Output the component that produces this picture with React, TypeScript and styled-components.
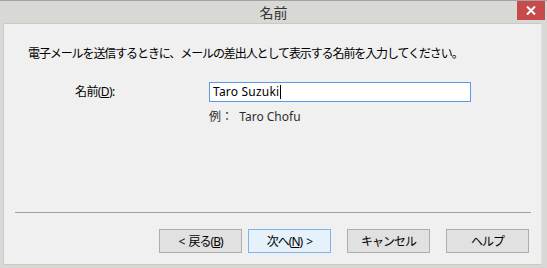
import React from 'react';
import styled, { createGlobalStyle } from 'styled-components';

const GlobalStyle = createGlobalStyle`
  html, body { margin: 0; padding: 0; background: #d8d8d4; }
  body { font-family: "Noto Sans", "Noto Sans CJK JP", sans-serif; }
`;

const Window = styled.div`
  width: 547px;
  height: 268px;
  box-sizing: border-box;
  background: #d8d8d4;
  border-top: 1px solid #a3a3a3;
  display: flex;
  flex-direction: column;
`;

const TitleBar = styled.div`
  height: 22px;
  position: relative;
  display: flex;
  align-items: center;
  justify-content: center;
  font-family: "Noto Sans CJK JP", sans-serif;
  font-size: 14px;
  color: #333;
`;

const CloseButton = styled.div`
  position: absolute;
  top: 0;
  right: 2px;
  width: 28px;
  height: 19px;
  background: #c74b4b;
  display: flex;
  align-items: center;
  justify-content: center;
`;

const Body = styled.div`
  flex: 1;
  margin: 0 5px 3px 3px;
  border: 1px solid #c9c9c6;
  border-right-color: #e2e2de;
  background: #f0f0f0;
  display: flex;
  flex-direction: column;
  font-size: 12px;
  color: #000;
`;

// Meiryo UI is narrow: tighten the CJK runs
const Intro = styled.div`
  padding: 21px 0 0 24px;
  line-height: 18px;
  letter-spacing: -1.1px;
`;

const FormGrid = styled.div`
  display: grid;
  grid-template-columns: 134px 262px;
  padding: 19px 0 0 71px;
  align-items: center;
`;

const Label = styled.div`
  line-height: 20px;
  letter-spacing: -0.6px;
`;

const TextBox = styled.div`
  box-sizing: border-box;
  height: 20px;
  border: 1px solid #569de5;
  background: #fff;
  padding: 0 3px;
  line-height: 18px;
  display: flex;
  align-items: center;
  letter-spacing: 0.2px;
`;

const Caret = styled.span`
  display: inline-block;
  width: 1px;
  height: 14px;
  background: #000;
  margin-left: 1px;
`;

const Hint = styled.div`
  grid-column: 2;
  margin-top: 7px;
  color: #2e2e2e;
  line-height: 16px;
`;

const Separator = styled.div`
  margin: auto 10px 0 11px;
  height: 1px;
  background: #a0a0a0;
`;

const ButtonRow = styled.div`
  display: flex;
  justify-content: flex-end;
  padding: 16px 12px 11px 0;
`;

const Button = styled.div<{ $primary?: boolean; $gap?: number }>`
  box-sizing: border-box;
  width: 83px;
  height: 24px;
  margin-left: ${p => p.$gap ?? 16}px;
  display: flex;
  align-items: center;
  justify-content: center;
  background: ${p => (p.$primary ? '#e5f1fb' : '#e1e1e1')};
  border: 1px solid ${p => (p.$primary ? '#7eb4ea' : '#adadad')};
  color: #000;
  letter-spacing: -1px;
`;

export default function App() {
  return (
    <>
      <GlobalStyle />
      <Window>
        <TitleBar>
          名前
          <CloseButton>
            <svg width="10" height="9" viewBox="0 0 10 9">
              <path d="M1 0.5 L9 8.5 M9 0.5 L1 8.5" stroke="#fff" strokeWidth="2" />
            </svg>
          </CloseButton>
        </TitleBar>
        <Body>
          <Intro>電子メールを送信するときに、メールの差出人として表示する名前を入力してください。</Intro>
          <FormGrid>
            <Label>
              名前(<u>D</u>):
            </Label>
            <TextBox>
              Taro Suzuki
              <Caret />
            </TextBox>
            <Hint>例：&nbsp; Taro Chofu</Hint>
          </FormGrid>
          <Separator />
          <ButtonRow>
            <Button $gap={0}>
              &lt;&nbsp;&nbsp;戻る(<u>B</u>)
            </Button>
            <Button $primary $gap={6}>
              次へ(<u>N</u>)&nbsp;&nbsp;&gt;
            </Button>
            <Button>キャンセル</Button>
            <Button>ヘルプ</Button>
          </ButtonRow>
        </Body>
      </Window>
    </>
  );
}
